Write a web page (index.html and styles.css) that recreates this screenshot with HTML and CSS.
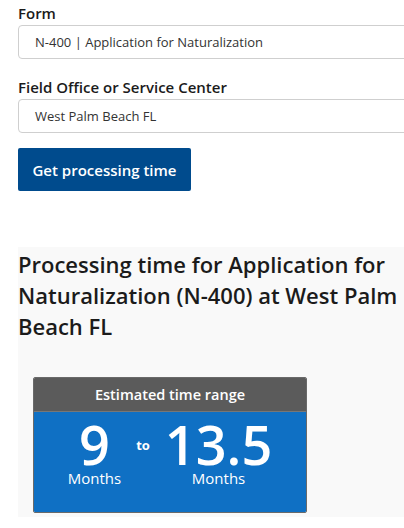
FILE: index.html
```html
<!DOCTYPE html>
<html lang="en">

<head>
    <meta charset="UTF-8">
    <meta name="viewport" content="width=device-width, initial-scale=1.0">
    <title>Processing time</title>
    <link rel="stylesheet" href="styles.css">
</head>

<body>
    <div id="page">
        <form id="lookup">
            <label class="field-label">Form</label>
            <div class="field-box">N-400 | Application for Naturalization</div>

            <label class="field-label">Field Office or Service Center</label>
            <div class="field-box">West Palm Beach FL</div>

            <button type="button" id="go">Get processing time</button>
        </form>

        <div id="result">
            <h2>Processing time for Application for Naturalization (N-400) at West Palm Beach FL</h2>

            <div class="range-card">
                <div class="range-head">Estimated time range</div>
                <div class="range-body">
                    <div class="range-num">
                        <span class="big">9</span>
                        <span class="unit">Months</span>
                    </div>
                    <span class="to">to</span>
                    <div class="range-num">
                        <span class="big">13.5</span>
                        <span class="unit">Months</span>
                    </div>
                </div>
            </div>
        </div>
    </div>
</body>

</html>
```
FILE: styles.css
```css
* {
    margin: 0;
    padding: 0;
    box-sizing: border-box;
}

body {
    font-family: "Open Sans", "Lato", sans-serif;
    color: #1b1b1b;
    background: #fff;
    overflow: hidden;
}

#page {
    width: 440px;
    padding-left: 18px;
}

#lookup {
    display: flex;
    flex-direction: column;
    align-items: flex-start;
}

.field-label {
    font-size: 15px;
    font-weight: 600;
    line-height: 18px;
    margin-top: 4px;
}

.field-label + .field-box {
    margin-top: 3px;
}

.field-box {
    width: 100%;
    height: 34px;
    border: 1px solid #cfcfcf;
    border-radius: 4px;
    padding-left: 16px;
    font-size: 13px;
    line-height: 32px;
    color: #333;
    margin-bottom: 15px;
}

#go {
    margin-top: 0;
    width: 173px;
    height: 43px;
    border: none;
    border-radius: 2px;
    background: #004b8d;
    color: #fff;
    font-family: inherit;
    font-size: 15px;
    font-weight: 600;
    cursor: pointer;
}

#result {
    margin-top: 56px;
    background: #f9f9f9;
    padding: 4px 0 4px 0;
    height: 270px;
}

#result h2 {
    font-size: 22px;
    font-weight: 600;
    line-height: 31px;
    width: 386px;
    margin-top: -2px;
}

.range-card {
    width: 274px;
    margin: 35px 0 0 15px;
    border: 1px solid #6a6a6a;
    border-radius: 2px;
    overflow: hidden;
}

.range-head {
    background: #5b5b5b;
    color: #fff;
    text-align: center;
    font-size: 14.5px;
    font-weight: 600;
    height: 34px;
    line-height: 34px;
    border-bottom: 1px solid #777;
}

.range-body {
    background: #0f70c4;
    color: #fff;
    display: flex;
    justify-content: center;
    align-items: flex-start;
    gap: 15px;
    padding: 5px 0 25px 0;
}

.range-num {
    display: flex;
    flex-direction: column;
    align-items: center;
}

.big {
    font-size: 54px;
    font-weight: 600;
    line-height: 54px;
}

.unit {
    font-size: 15px;
    line-height: 18px;
    margin-top: -2px;
}

.to {
    font-size: 13px;
    font-weight: 700;
    margin-top: 19px;
}
```
